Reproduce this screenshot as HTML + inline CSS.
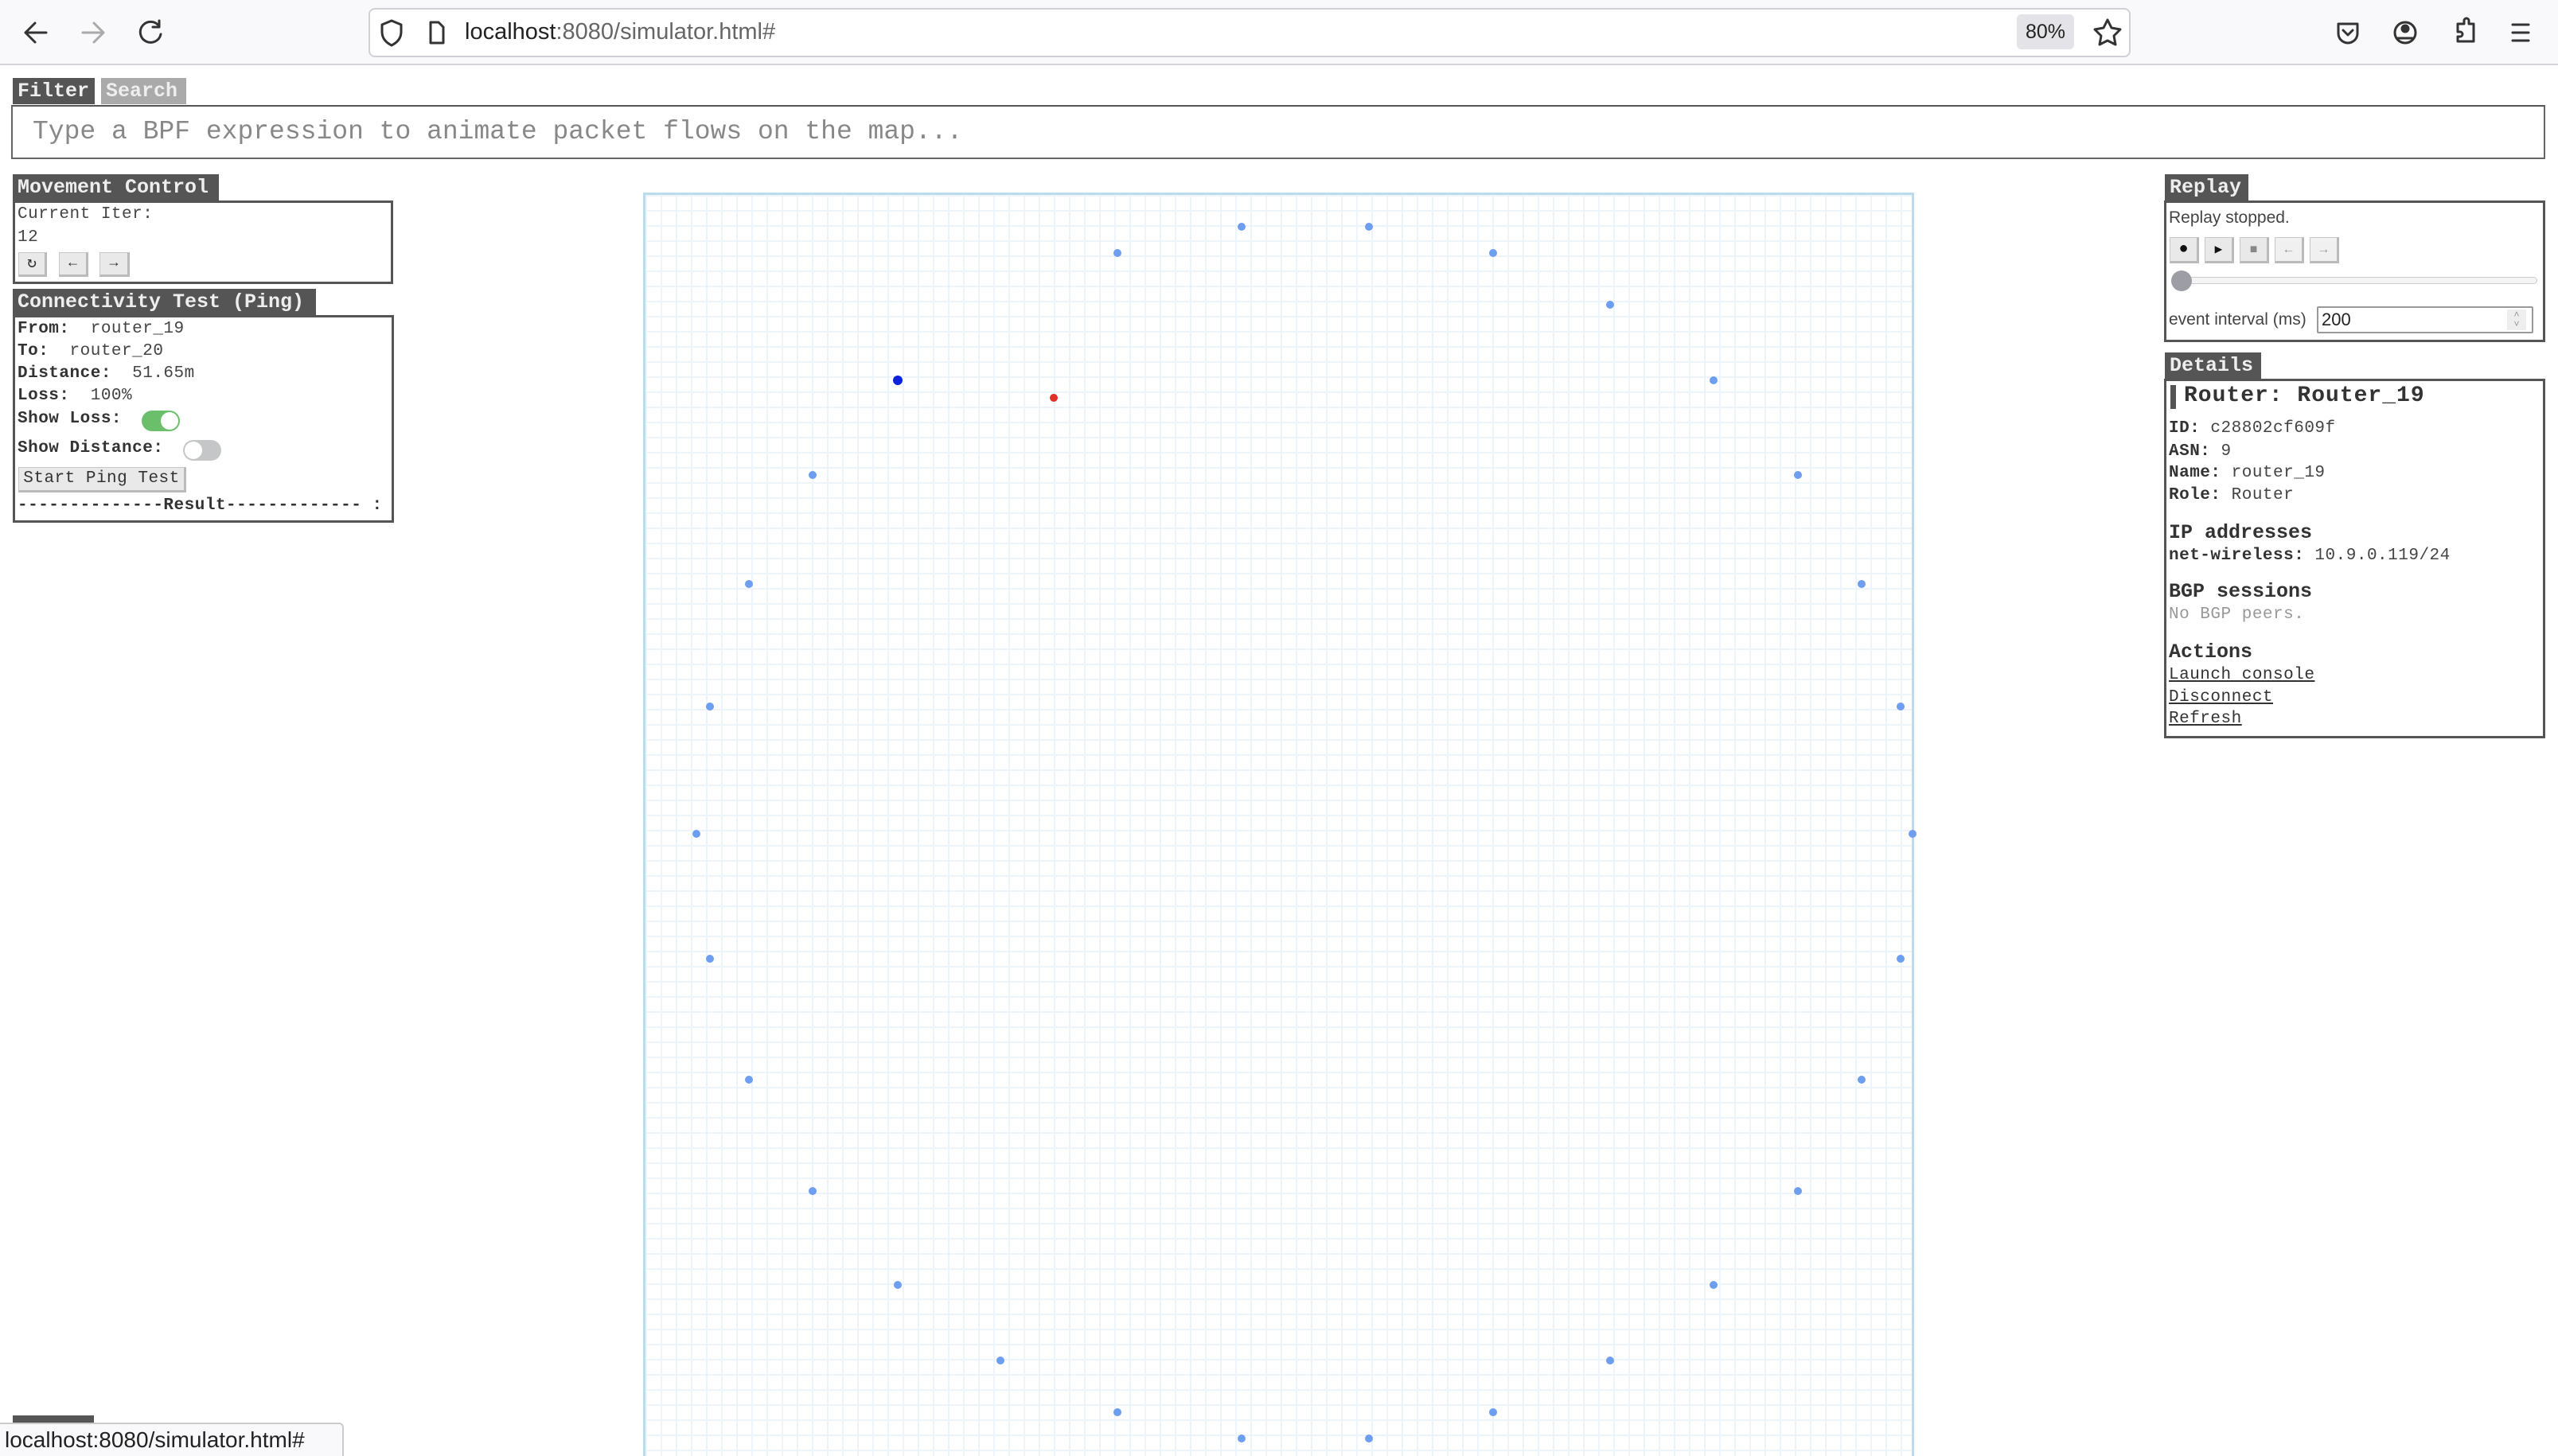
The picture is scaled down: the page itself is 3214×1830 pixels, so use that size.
<!DOCTYPE html>
<html style="overflow:hidden;height:1830px"><head><meta charset="utf-8"><style>
*{box-sizing:border-box;margin:0;padding:0}
body{width:3214px;height:1830px;overflow:hidden;background:#fff;position:relative;font-family:"Liberation Mono",monospace;color:#333}
.a{position:absolute}
.bar{left:0;top:0;width:3214px;height:82px;background:#f9f9fb;border-bottom:2px solid #d4d4d8}
.url{left:463px;top:10px;width:2214px;height:62px;background:#fff;border:2px solid #d0d0d6;border-radius:8px}
.sans{font-family:"Liberation Sans",sans-serif}
.hdr{background:#555;color:#eee;font-weight:bold;font-size:25px;line-height:33px;padding-left:6px;white-space:nowrap}
.box{border:3px solid #555;background:#fff}
.t{font-size:21px;line-height:28px;white-space:pre;color:#444;letter-spacing:0.5px}
.t b{color:#333}
.btn{background:#e9e9e9;border:1px solid #c8c8c8;border-bottom:3px solid #bbb;border-right:3px solid #bbb;text-align:center;color:#333}
.map{left:808px;top:242px;width:1597px;height:1588px;border:3px solid #bcdcec;border-bottom:none;
background-color:#fff;
background-image:linear-gradient(to right,#edf5fa 2px,transparent 2px),linear-gradient(to bottom,#edf5fa 2px,transparent 2px);
background-size:19px 19px}
</style></head><body>
<div class="a bar"></div>
<div class="a url"></div>
<svg class="a" style="left:0;top:0" width="3214" height="82">
<g fill="none" stroke="#333" stroke-width="3" stroke-linecap="round" stroke-linejoin="round">
<path d="M58 41H32M44 29 32 41 44 53"/>
<path d="M104 41h26M118 29l12 12-12 12" stroke="#aaa"/>
<path d="M200 33a13 13 0 1 0 2 10M200 26v8h-8"/>
<path d="M492 26l-12 5v9c0 9 6 14 12 17 6-3 12-8 12-17v-9z"/>
<path d="M541 28h10l6 6v20h-16z"/>
<path d="M2648 25l5 10 11 2-8 8 2 11-10-5-10 5 2-11-8-8 11-2z"/>
<path d="M2938 30h24v12a12 12 0 0 1-24 0z"/><path d="M2944 38l6 6 6-6"/>
<circle cx="3022" cy="41" r="13"/><circle cx="3022" cy="36" r="4" fill="#333"/><path d="M3013 48h18"/>
<path d="M3088 30h8v-4a3 3 0 0 1 6 0v4h6v22h-20v-6h3a3 3 0 0 0 0-6h-3z"/>
<path d="M3157 31h20M3157 41h20M3157 51h20"/>
</g></svg>
<div class="a sans" style="left:584px;top:22px;font-size:29px;line-height:36px;color:#222">localhost<span style="color:#666">:8080/simulator.html#</span></div>
<div class="a sans" style="left:2534px;top:18px;width:72px;height:44px;background:#e4e4e8;border-radius:6px;font-size:25px;line-height:44px;text-align:center;color:#222">80%</div>

<div class="a hdr" style="left:16px;top:98px;width:103px">Filter</div>
<div class="a hdr" style="left:127px;top:98px;width:107px;background:#aaa;color:#eee">Search</div>
<div class="a" style="left:14px;top:132px;width:3184px;height:68px;border:2px solid #666;border-top:2px solid #555"></div>
<div class="a" style="left:41px;top:146px;font-size:33px;line-height:40px;color:#888">Type a BPF expression to animate packet flows on the map...</div>

<div class="a hdr" style="left:16px;top:219px;width:259px">Movement Control</div>
<div class="a box" style="left:16px;top:252px;width:478px;height:105px"></div>
<div class="a t" style="left:22px;top:256px">Current Iter:</div>
<div class="a t" style="left:22px;top:285px">12</div>
<div class="a btn" style="left:23px;top:317px;width:36px;height:31px;font-size:20px;line-height:27px">↻</div>
<div class="a btn" style="left:74px;top:317px;width:37px;height:31px;font-size:18px;line-height:27px">←</div>
<div class="a btn" style="left:125px;top:317px;width:38px;height:31px;font-size:18px;line-height:27px">→</div>

<div class="a hdr" style="left:16px;top:363px;width:381px">Connectivity Test (Ping)</div>
<div class="a box" style="left:16px;top:396px;width:479px;height:261px"></div>
<div class="a t" style="left:22px;top:400px"><b>From:</b>  router_19</div>
<div class="a t" style="left:22px;top:428px"><b>To:</b>  router_20</div>
<div class="a t" style="left:22px;top:456px"><b>Distance:</b>  51.65m</div>
<div class="a t" style="left:22px;top:484px"><b>Loss:</b>  100%</div>
<div class="a t" style="left:22px;top:513px"><b>Show Loss:</b></div>
<div class="a" style="left:178px;top:516px;width:48px;height:26px;border-radius:13px;background:#6cbf6a"></div>
<div class="a" style="left:202px;top:518px;width:22px;height:22px;border-radius:11px;background:#fff"></div>
<div class="a t" style="left:22px;top:550px"><b>Show Distance:</b></div>
<div class="a" style="left:230px;top:553px;width:48px;height:26px;border-radius:13px;background:#c4c6c8"></div>
<div class="a" style="left:232px;top:555px;width:22px;height:22px;border-radius:11px;background:#fff"></div>
<div class="a btn t" style="left:23px;top:587px;width:211px;height:32px;line-height:28px">Start Ping Test</div>
<div class="a t" style="left:22px;top:622px"><b>--------------Result------------- :</b></div>

<div class="a map"></div>
<svg class="a" style="left:0;top:0" width="3214" height="1830">
<g fill="#6e9ef0">
<circle cx="1560" cy="285" r="5"/><circle cx="1720" cy="285" r="5"/><circle cx="1404" cy="318" r="5"/><circle cx="1876" cy="318" r="5"/>
<circle cx="2023" cy="383" r="5"/><circle cx="2153" cy="478" r="5"/><circle cx="2259" cy="597" r="5"/><circle cx="2339" cy="734" r="5"/>
<circle cx="2388" cy="888" r="5"/><circle cx="2403" cy="1048" r="5"/><circle cx="2388" cy="1205" r="5"/><circle cx="2339" cy="1357" r="5"/>
<circle cx="2259" cy="1497" r="5"/><circle cx="2153" cy="1615" r="5"/><circle cx="2023" cy="1710" r="5"/><circle cx="1876" cy="1775" r="5"/>
<circle cx="1720" cy="1808" r="5"/><circle cx="1560" cy="1808" r="5"/><circle cx="1404" cy="1775" r="5"/><circle cx="1257" cy="1710" r="5"/>
<circle cx="1128" cy="1615" r="5"/><circle cx="1021" cy="1497" r="5"/><circle cx="941" cy="1357" r="5"/><circle cx="892" cy="1205" r="5"/>
<circle cx="875" cy="1048" r="5"/><circle cx="892" cy="888" r="5"/><circle cx="941" cy="734" r="5"/><circle cx="1021" cy="597" r="5"/>
</g>
<circle cx="1128" cy="478" r="6" fill="#0a22e0"/>
<circle cx="1324" cy="500" r="5" fill="#e0302a"/>
</svg>

<div class="a hdr" style="left:2720px;top:219px;width:105px">Replay</div>
<div class="a box" style="left:2719px;top:252px;width:479px;height:178px"></div>
<div class="a sans" style="left:2725px;top:260px;font-size:21px;line-height:28px;color:#444">Replay stopped.</div>
<div class="a btn" style="left:2726px;top:298px;width:37px;height:33px;font-size:20px;line-height:30px;color:#111">●</div>
<div class="a btn" style="left:2770px;top:298px;width:37px;height:33px;font-size:16px;line-height:30px;color:#111">▶</div>
<div class="a btn" style="left:2814px;top:298px;width:37px;height:33px;font-size:16px;line-height:30px;color:#888">■</div>
<div class="a btn" style="left:2858px;top:298px;width:37px;height:33px;font-size:16px;line-height:30px;color:#999;background:#f0f0f0">←</div>
<div class="a btn" style="left:2902px;top:298px;width:37px;height:33px;font-size:16px;line-height:30px;color:#999;background:#f0f0f0">→</div>
<div class="a" style="left:2732px;top:348px;width:456px;height:9px;border:1px solid #ccc;border-radius:5px;background:#f4f4f4"></div>
<div class="a" style="left:2728px;top:340px;width:26px;height:26px;border-radius:13px;background:#9d9da6"></div>
<div class="a sans" style="left:2725px;top:388px;font-size:21px;line-height:28px;color:#444">event interval (ms)</div>
<div class="a" style="left:2911px;top:385px;width:272px;height:34px;border:2px solid #999;border-radius:2px"></div>
<div class="a sans" style="left:2917px;top:388px;font-size:22px;line-height:28px;color:#222">200</div>
<div class="a sans" style="left:3150px;top:389px;width:24px;height:26px;background:#eee;color:#999;font-size:12px;line-height:12px;text-align:center">˄<br>˅</div>

<div class="a hdr" style="left:2720px;top:443px;width:121px">Details</div>
<div class="a box" style="left:2719px;top:476px;width:479px;height:452px"></div>
<div class="a" style="left:2727px;top:484px;width:7px;height:30px;background:#555"></div>
<div class="a" style="left:2744px;top:481px;font-size:28px;line-height:34px;font-weight:bold;color:#333;letter-spacing:1px">Router: Router_19</div>
<div class="a t" style="left:2725px;top:525px"><b>ID:</b> c28802cf609f</div>
<div class="a t" style="left:2725px;top:554px"><b>ASN:</b> 9</div>
<div class="a t" style="left:2725px;top:581px"><b>Name:</b> router_19</div>
<div class="a t" style="left:2725px;top:609px"><b>Role:</b> Router</div>
<div class="a" style="left:2725px;top:654px;font-size:25px;line-height:32px;font-weight:bold;color:#333">IP addresses</div>
<div class="a t" style="left:2725px;top:685px"><b>net-wireless:</b> 10.9.0.119/24</div>
<div class="a" style="left:2725px;top:728px;font-size:25px;line-height:32px;font-weight:bold;color:#333">BGP sessions</div>
<div class="a t" style="left:2725px;top:759px;color:#999">No BGP peers.</div>
<div class="a" style="left:2725px;top:804px;font-size:25px;line-height:32px;font-weight:bold;color:#333">Actions</div>
<div class="a t" style="left:2725px;top:835px;text-decoration:underline;color:#333">Launch console</div>
<div class="a t" style="left:2725px;top:863px;text-decoration:underline;color:#333">Disconnect</div>
<div class="a t" style="left:2725px;top:890px;text-decoration:underline;color:#333">Refresh</div>

<div class="a" style="left:16px;top:1779px;width:102px;height:20px;background:#555"></div>
<div class="a sans" style="left:0;top:1788px;width:432px;height:42px;background:#f9f9fb;border:2px solid #ccc;border-left:none;border-bottom:none;border-top-right-radius:6px;font-size:28px;line-height:40px;padding-left:6px;color:#222">localhost:8080/simulator.html#</div>
</body></html>
